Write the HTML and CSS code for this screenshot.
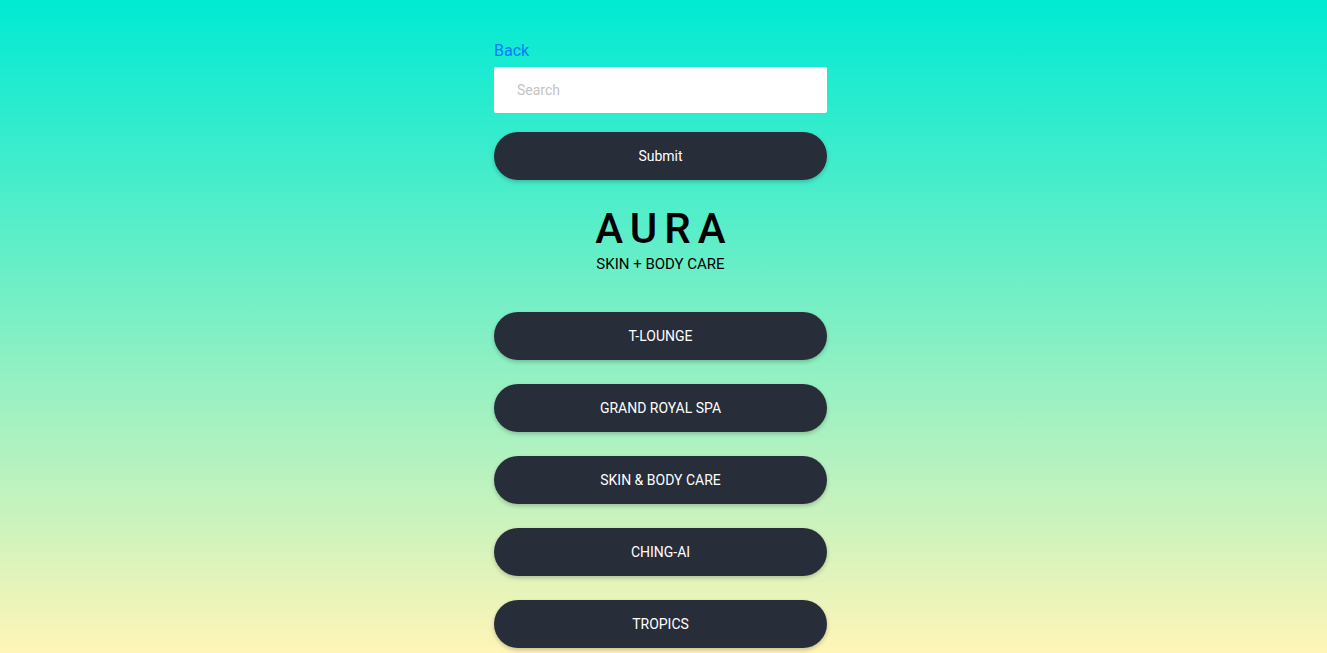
FILE: index.html
```html
<!DOCTYPE html>
<html>
<head>
<meta charset="utf-8">
<link rel="stylesheet" href="styles.css">
</head>
<body>
<div class="page">
  <main class="panel">
    <a class="back" href="#">Back</a>
    <input class="search" type="text" placeholder="Search">
    <button class="pill">Submit</button>
    <header class="brand">
      <h1 class="brand-title">AURA</h1>
      <p class="brand-sub">SKIN + BODY CARE</p>
    </header>
    <nav class="list">
      <button class="pill">T-LOUNGE</button>
      <button class="pill">GRAND ROYAL SPA</button>
      <button class="pill">SKIN &amp; BODY CARE</button>
      <button class="pill">CHING-AI</button>
      <button class="pill">TROPICS</button>
    </nav>
  </main>
</div>
</body>
</html>
```

FILE: styles.css
```css
* { box-sizing: border-box; }
html, body { margin: 0; padding: 0; }
body {
  font-family: Roboto, "Liberation Sans", sans-serif;
  background: linear-gradient(to bottom, #00ead3 0%, #fff5b7 653px);
  background-attachment: fixed;
  min-height: 100vh;
}
.page {
  padding: 40px 6px 24px 0;
  display: flex;
  justify-content: center;
}
.panel {
  width: 333px;
  display: flex;
  flex-direction: column;
}
.back {
  color: #007bff;
  font-size: 16px;
  line-height: 20px;
  text-decoration: none;
  margin-bottom: 6px;
  padding-top: 1px;
}
.search {
  height: 46px;
  border: none;
  border-radius: 2px;
  background: #fff;
  padding: 0 23px;
  font-family: Roboto, "Liberation Sans", sans-serif;
  font-size: 14px;
  color: #333;
  outline: none;
  margin-bottom: 19px;
}
.search::placeholder { color: #c4c4c4; }
.pill {
  height: 48px;
  width: 100%;
  border: none;
  border-radius: 24px;
  background: #282d3a;
  color: #fff;
  font-family: Roboto, "Liberation Sans", sans-serif;
  font-size: 14px;
  font-weight: 400;
  box-shadow: 0 2px 4px rgba(0,0,0,0.22);
  cursor: pointer;
}
.brand {
  margin-top: 24px;
  text-align: center;
}
.brand-title {
  margin: 0;
  font-size: 42px;
  font-weight: 500;
  line-height: 49px;
  letter-spacing: 7px;
  padding-left: 7px;
  color: #000;
}
.brand-sub {
  margin: 2px 0 0;
  font-size: 15px;
  line-height: 19px;
  color: #000;
}
.list {
  margin-top: 38px;
  display: flex;
  flex-direction: column;
  gap: 24px;
}
```
